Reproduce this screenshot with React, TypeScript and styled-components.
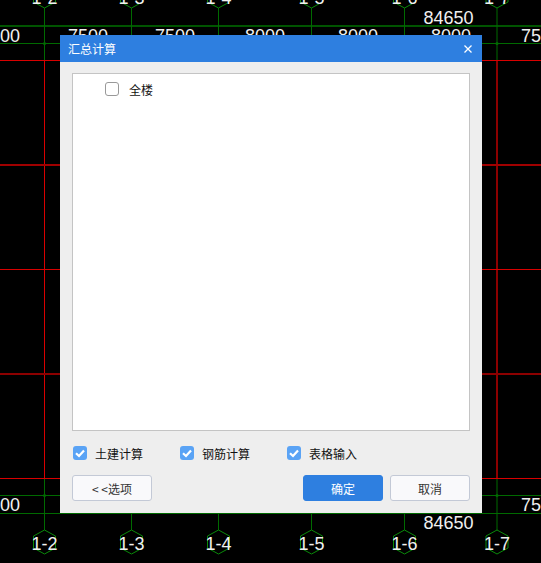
import React from 'react'
import styled, { createGlobalStyle } from 'styled-components'

const GlobalStyle = createGlobalStyle`
  html, body {
    margin: 0;
    padding: 0;
    background: #000;
  }
`

const GREEN = '#006a00'
const HEX_GREEN = '#0a8a0a'
const RED = '#d80000'
const DARK_RED = '#8c0000'

const AXES = [
  { x: 44.5, label: '1-2' },
  { x: 131.5, label: '1-3' },
  { x: 218.5, label: '1-4' },
  { x: 311.5, label: '1-5' },
  { x: 404.5, label: '1-6' },
  { x: 497, label: '1-7' },
]

const RED_ROWS = [
  { y: 60.5, width: 1, color: RED },
  { y: 165, width: 2, color: '#a00000' },
  { y: 269.5, width: 1, color: RED },
  { y: 374, width: 2, color: DARK_RED },
  { y: 478.5, width: 1, color: RED },
]

const TOP_DIMENSIONS = [
  { x: 88, label: '7500' },
  { x: 175, label: '7500' },
  { x: 265, label: '8000' },
  { x: 358, label: '8000' },
  { x: 451, label: '8000' },
]

function hexagon(cx: number, cy: number) {
  const r = 12
  const w = 11
  return `${cx},${cy - r} ${cx + w},${cy - r / 2} ${cx + w},${cy + r / 2} ${cx},${cy + r} ${cx - w},${cy + r / 2} ${cx - w},${cy - r / 2}`
}

function CadDrawing() {
  return (
    <Canvas viewBox="0 0 541 563">
      <line x1={0} y1={26} x2={541} y2={26} stroke="#005400" strokeWidth={2} />
      <line x1={0} y1={43.5} x2={541} y2={43.5} stroke={GREEN} />
      <line x1={0} y1={495.5} x2={541} y2={495.5} stroke={GREEN} />
      <line x1={0} y1={513.5} x2={541} y2={513.5} stroke={GREEN} />
      {AXES.map((axis) => (
        <g key={axis.label}>
          <line x1={axis.x} y1={8} x2={axis.x} y2={60} stroke={GREEN} />
          <line x1={axis.x} y1={478} x2={axis.x} y2={530} stroke={GREEN} />
          <polygon points={hexagon(axis.x, -4)} fill="none" stroke={HEX_GREEN} />
          <polygon points={hexagon(axis.x, 542)} fill="none" stroke={HEX_GREEN} />
          <AxisLabel x={axis.x} y={4}>{axis.label}</AxisLabel>
          <AxisLabel x={axis.x} y={550}>{axis.label}</AxisLabel>
        </g>
      ))}
      <circle cx={44.5} cy={43.5} r={1.5} fill={GREEN} />
      <circle cx={497} cy={43.5} r={1.5} fill={GREEN} />
      <circle cx={44.5} cy={495.5} r={1.5} fill={GREEN} />
      <circle cx={497} cy={495.5} r={1.5} fill={GREEN} />
      <line x1={44.5} y1={60} x2={44.5} y2={478} stroke={RED} />
      <line x1={497} y1={60} x2={497} y2={478} stroke={DARK_RED} strokeWidth={2} />
      {RED_ROWS.map((row) => (
        <line key={row.y} x1={0} y1={row.y} x2={541} y2={row.y} stroke={row.color} strokeWidth={row.width} />
      ))}
      {TOP_DIMENSIONS.map((dim) => (
        <DimLabel key={dim.x} x={dim.x} y={41.5} textAnchor="middle">
          {dim.label}
        </DimLabel>
      ))}
      <DimLabel x={0} y={41.5}>00</DimLabel>
      <DimLabel x={521} y={41.5}>75</DimLabel>
      <DimLabel x={0} y={511}>00</DimLabel>
      <DimLabel x={521} y={511}>75</DimLabel>
      <DimLabel x={448.5} y={24} textAnchor="middle">84650</DimLabel>
      <DimLabel x={448.5} y={529} textAnchor="middle">84650</DimLabel>
    </Canvas>
  )
}

function CheckBox({ checked }: { checked?: boolean }) {
  return (
    <Box $checked={checked}>
      {checked && (
        <svg width="10" height="10" viewBox="0 0 10 10">
          <path d="M1 5.2 L4 8 L9 2.4" fill="none" stroke="#fff" strokeWidth="2.2" />
        </svg>
      )}
    </Box>
  )
}

export default function App() {
  return (
    <Page>
      <GlobalStyle />
      <CadDrawing />
      <Dialog>
        <TitleBar>
          <span>汇总计算</span>
          <svg width="8" height="8" viewBox="0 0 8 8">
            <path d="M0.5 0.5 L7.5 7.5 M7.5 0.5 L0.5 7.5" stroke="#fff" strokeWidth="1.3" />
          </svg>
        </TitleBar>
        <Body>
          <FloorPanel>
            <FloorRow>
              <CheckBox />
              <span>全楼</span>
            </FloorRow>
          </FloorPanel>
          <OptionRow>
            <Option>
              <CheckBox checked />
              <span>土建计算</span>
            </Option>
            <Option>
              <CheckBox checked />
              <span>钢筋计算</span>
            </Option>
            <Option>
              <CheckBox checked />
              <span>表格输入</span>
            </Option>
          </OptionRow>
          <ButtonRow>
            <Button>&lt; &lt;选项</Button>
            <RightButtons>
              <Button $primary>确定</Button>
              <Button>取消</Button>
            </RightButtons>
          </ButtonRow>
        </Body>
      </Dialog>
    </Page>
  )
}

const Page = styled.div`
  position: relative;
  width: 541px;
  height: 563px;
  overflow: hidden;
  background: #000;
  font-family: 'Noto Sans CJK SC', 'Noto Sans', sans-serif;
  font-size: 12px;
`

const Canvas = styled.svg`
  position: absolute;
  inset: 0;
  width: 541px;
  height: 563px;
`

const AxisLabel = styled.text`
  fill: #f0f0f0;
  font-family: 'Liberation Sans', sans-serif;
  font-size: 18px;
  text-anchor: middle;
`

const DimLabel = styled.text`
  fill: #f0f0f0;
  font-family: 'Liberation Sans', sans-serif;
  font-size: 18px;
`

const Dialog = styled.div`
  position: absolute;
  left: 60px;
  top: 35px;
  width: 422px;
  height: 478px;
  display: flex;
  flex-direction: column;
  background: #eeeeee;
`

const TitleBar = styled.div`
  height: 27px;
  flex: none;
  display: flex;
  align-items: center;
  justify-content: space-between;
  padding: 0 10px 0 8px;
  background: #2e7fe0;
  color: #fff;
`

const Body = styled.div`
  flex: 1;
  display: flex;
  flex-direction: column;
  padding: 11px 12px 12px;
  min-height: 0;
`

const FloorPanel = styled.div`
  height: 358px;
  box-sizing: border-box;
  background: #fff;
  border: 1px solid #c4c4c4;
`

const FloorRow = styled.label`
  display: flex;
  align-items: center;
  gap: 10px;
  padding: 8px 0 0 32px;
  height: 14px;
  color: #111;
`

const OptionRow = styled.div`
  display: flex;
  margin-top: 15px;
  padding-left: 1px;
`

const Option = styled.label`
  width: 107px;
  height: 14px;
  display: flex;
  align-items: center;
  gap: 8px;
  color: #111;
`

const Box = styled.span<{ $checked?: boolean }>`
  width: 14px;
  height: 14px;
  flex: none;
  box-sizing: border-box;
  display: flex;
  align-items: center;
  justify-content: center;
  border-radius: 3px;
  background: ${(p) => (p.$checked ? '#5aa3f5' : '#fff')};
  border: ${(p) => (p.$checked ? 'none' : '1px solid #999')};
`

const ButtonRow = styled.div`
  display: flex;
  justify-content: space-between;
  margin-top: 15px;
`

const RightButtons = styled.div`
  display: flex;
  gap: 7px;
`

const Button = styled.button<{ $primary?: boolean }>`
  width: 80px;
  height: 26px;
  box-sizing: border-box;
  padding: 0;
  font-family: inherit;
  font-size: 12px;
  border-radius: 3px;
  color: ${(p) => (p.$primary ? '#fff' : '#333')};
  background: ${(p) => (p.$primary ? '#2e7fe0' : '#f9f9fb')};
  border: 1px solid ${(p) => (p.$primary ? '#2e7fe0' : '#c3c9d6')};
`
